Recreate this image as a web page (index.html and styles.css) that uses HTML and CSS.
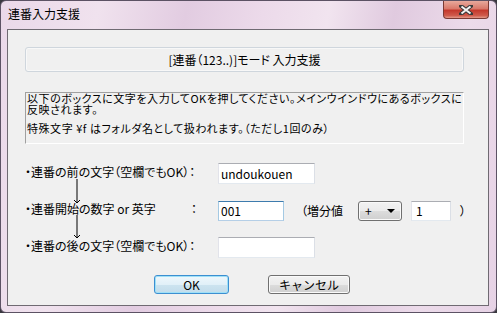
FILE: index.html
```html
<!DOCTYPE html>
<html lang="ja">
<head>
    <meta charset="UTF-8">
    <title>連番入力支援</title>
    <link rel="stylesheet" href="styles.css">
</head>
<body>
    <div class="window">
        <div class="titlebar">
            <span class="title">連番入力支援</span>
            <span class="close">
                <svg width="14" height="10" viewBox="0 0 14 10">
                    <path d="M2 1 L12 9 M12 1 L2 9" stroke="#3a3a3a" stroke-width="4" stroke-linecap="square"/>
                    <path d="M2.5 1.5 L11.5 8.5 M11.5 1.5 L2.5 8.5" stroke="#f4f4f4" stroke-width="2"/>
                </svg>
            </span>
        </div>
        <div class="client">
            <div class="mode">[連番（123..)]モード 入力支援</div>
            <div class="note">
                <p class="line">以下のボックスに文字を入力してOKを押してください。メインウインドウにあるボックスに</p>
                <p class="line">反映されます。</p>
                <p class="line gap">特殊文字 ¥f はフォルダ名として扱われます。（ただし1回のみ）</p>
            </div>
            <div class="form">
                <svg class="arrows" width="10" height="80" viewBox="0 0 10 80">
                    <path d="M5 16 V40 M2 37 L5 40 L8 37" stroke="#000" fill="none"/>
                    <path d="M5 52 V75 M2 72 L5 75 L8 72" stroke="#000" fill="none"/>
                </svg>
                <div class="row">
                    <label class="label">・連番の前の文字（空欄でもOK）：</label>
                    <input class="text wide" type="text" value="undoukouen">
                </div>
                <div class="row">
                    <label class="label split"><span>・連番開始の数字 or 英字</span><span>：</span></label>
                    <input class="text short focused" type="text" value="001">
                    <span class="step">（増分値</span>
                    <div class="combo"><span>+</span><span class="caret"></span></div>
                    <input class="text tiny" type="text" value="1">
                    <span class="paren">）</span>
                </div>
                <div class="row">
                    <label class="label">・連番の後の文字（空欄でもOK）：</label>
                    <input class="text wide" type="text" value="">
                </div>
            </div>
            <div class="buttons">
                <button class="btn default">OK</button>
                <button class="btn cancel">キャンセル</button>
            </div>
        </div>
    </div>
</body>
</html>
```

FILE: styles.css
```css
body {
    margin: 0;
    background: #3a3840;
    font-family: "Noto Sans CJK JP", sans-serif;
    font-size: 12px;
    color: #000;
    font-feature-settings: "palt";
}

.window {
    width: 497px;
    height: 313px;
    box-sizing: border-box;
    border: 1px solid #5c5264;
    border-radius: 6px;
    background: linear-gradient(100deg, #ead8e9 0%, #f0e2ee 18%, #e2cce1 34%, #ecdaea 48%, #f1e4ef 60%, #e0cadf 72%, #ecdbea 86%, #e6d2e5 100%);
    display: flex;
    flex-direction: column;
}

.titlebar {
    height: 28px;
    display: flex;
    justify-content: space-between;
    align-items: flex-start;
    padding-left: 7px;
}

.title {
    font-size: 12px;
    line-height: 26px;
}

.close {
    width: 46px;
    height: 18px;
    margin-right: 7px;
    box-sizing: border-box;
    border: 1px solid #7a3a34;
    border-top: none;
    border-radius: 0 0 4px 4px;
    background: linear-gradient(#e8a99c 0%, #d9796b 45%, #c4382c 55%, #cf5a4b 85%, #e49a8a 100%);
    display: flex;
    justify-content: center;
    align-items: center;
}

.client {
    margin: 0 7px 0 6px;
    height: 277px;
    box-sizing: border-box;
    border: 1px solid #6f6a72;
    background: #f0f0f0;
    padding: 17px 0 0 17px;
}

.mode {
    width: 439px;
    height: 25px;
    box-sizing: border-box;
    border: 1px solid #cfd6dd;
    border-radius: 3px;
    box-shadow: inset 0 0 0 1px #f8f8f8;
    text-align: center;
    line-height: 23px;
}

.note {
    width: 439px;
    height: 52px;
    margin-top: 20px;
    box-sizing: border-box;
    border: 1px solid;
    border-color: #a0a0a0 #ffffff #ffffff #a0a0a0;
    padding: 0 0 0 1px;
    white-space: nowrap;
    font-size: 11px;
    letter-spacing: 0.55px;
}

.note .line {
    margin: 0;
    height: 11px;
    line-height: 11px;
}

.note .line.gap {
    margin-top: 8px;
}

.form {
    position: relative;
    margin-top: 19px;
    display: flex;
    flex-direction: column;
    gap: 16px;
}

.arrows {
    position: absolute;
    left: 47px;
    top: 0;
}

.row {
    height: 21px;
    display: flex;
    align-items: center;
}

.label {
    width: 193px;
    padding-bottom: 4px;
}

.label.split {
    display: flex;
    justify-content: space-between;
    padding-right: 21px;
    box-sizing: border-box;
}

.text {
    height: 21px;
    box-sizing: border-box;
    border: 1px solid;
    border-color: #abadb3 #dbdfe6 #e3e9ef #e2e3ea;
    background: #fff;
    font-family: inherit;
    font-size: 12px;
    padding: 0 2px;
    margin: 0;
    outline: none;
}

.text.wide {
    width: 97px;
}

.text.short {
    width: 66px;
    height: 20px;
}

.text.focused {
    border-color: #3d7bad #a4c9e3 #b5cfe7 #a4c9e3;
}

.text.tiny {
    width: 40px;
    height: 20px;
    padding-left: 4px;
}

.step {
    margin-left: 17px;
    width: 57px;
}

.combo {
    width: 44px;
    height: 20px;
    box-sizing: border-box;
    border: 1px solid #707070;
    border-radius: 3px;
    background: linear-gradient(#f2f2f2 0%, #ebebeb 50%, #dddddd 50%, #cfcfcf 100%);
    box-shadow: inset 0 0 0 1px #fafafa;
    display: flex;
    justify-content: space-between;
    align-items: center;
    padding: 0 6px 0 6px;
    margin-right: 9px;
}

.caret {
    width: 0;
    height: 0;
    border-left: 4px solid transparent;
    border-right: 4px solid transparent;
    border-top: 4px solid #000;
}

.paren {
    margin-left: 9px;
}

.buttons {
    margin-top: 17px;
    padding-left: 129px;
    display: flex;
    gap: 39px;
}

.btn {
    height: 19px;
    box-sizing: border-box;
    border: 1px solid #707070;
    border-radius: 3px;
    background: linear-gradient(#f2f2f2 0%, #ebebeb 50%, #dddddd 50%, #cfcfcf 100%);
    box-shadow: inset 0 0 0 1px #fafafa;
    font-family: inherit;
    font-size: 12px;
    padding: 0;
    line-height: 16px;
}

.btn.default {
    width: 75px;
    border-color: #3c8fd1;
    background: linear-gradient(#eef7fc 0%, #e1f0f8 50%, #cde4f0 50%, #c2dceb 100%);
    box-shadow: inset 0 0 0 1px #9fe0f7;
}

.btn.cancel {
    width: 82px;
}
```
